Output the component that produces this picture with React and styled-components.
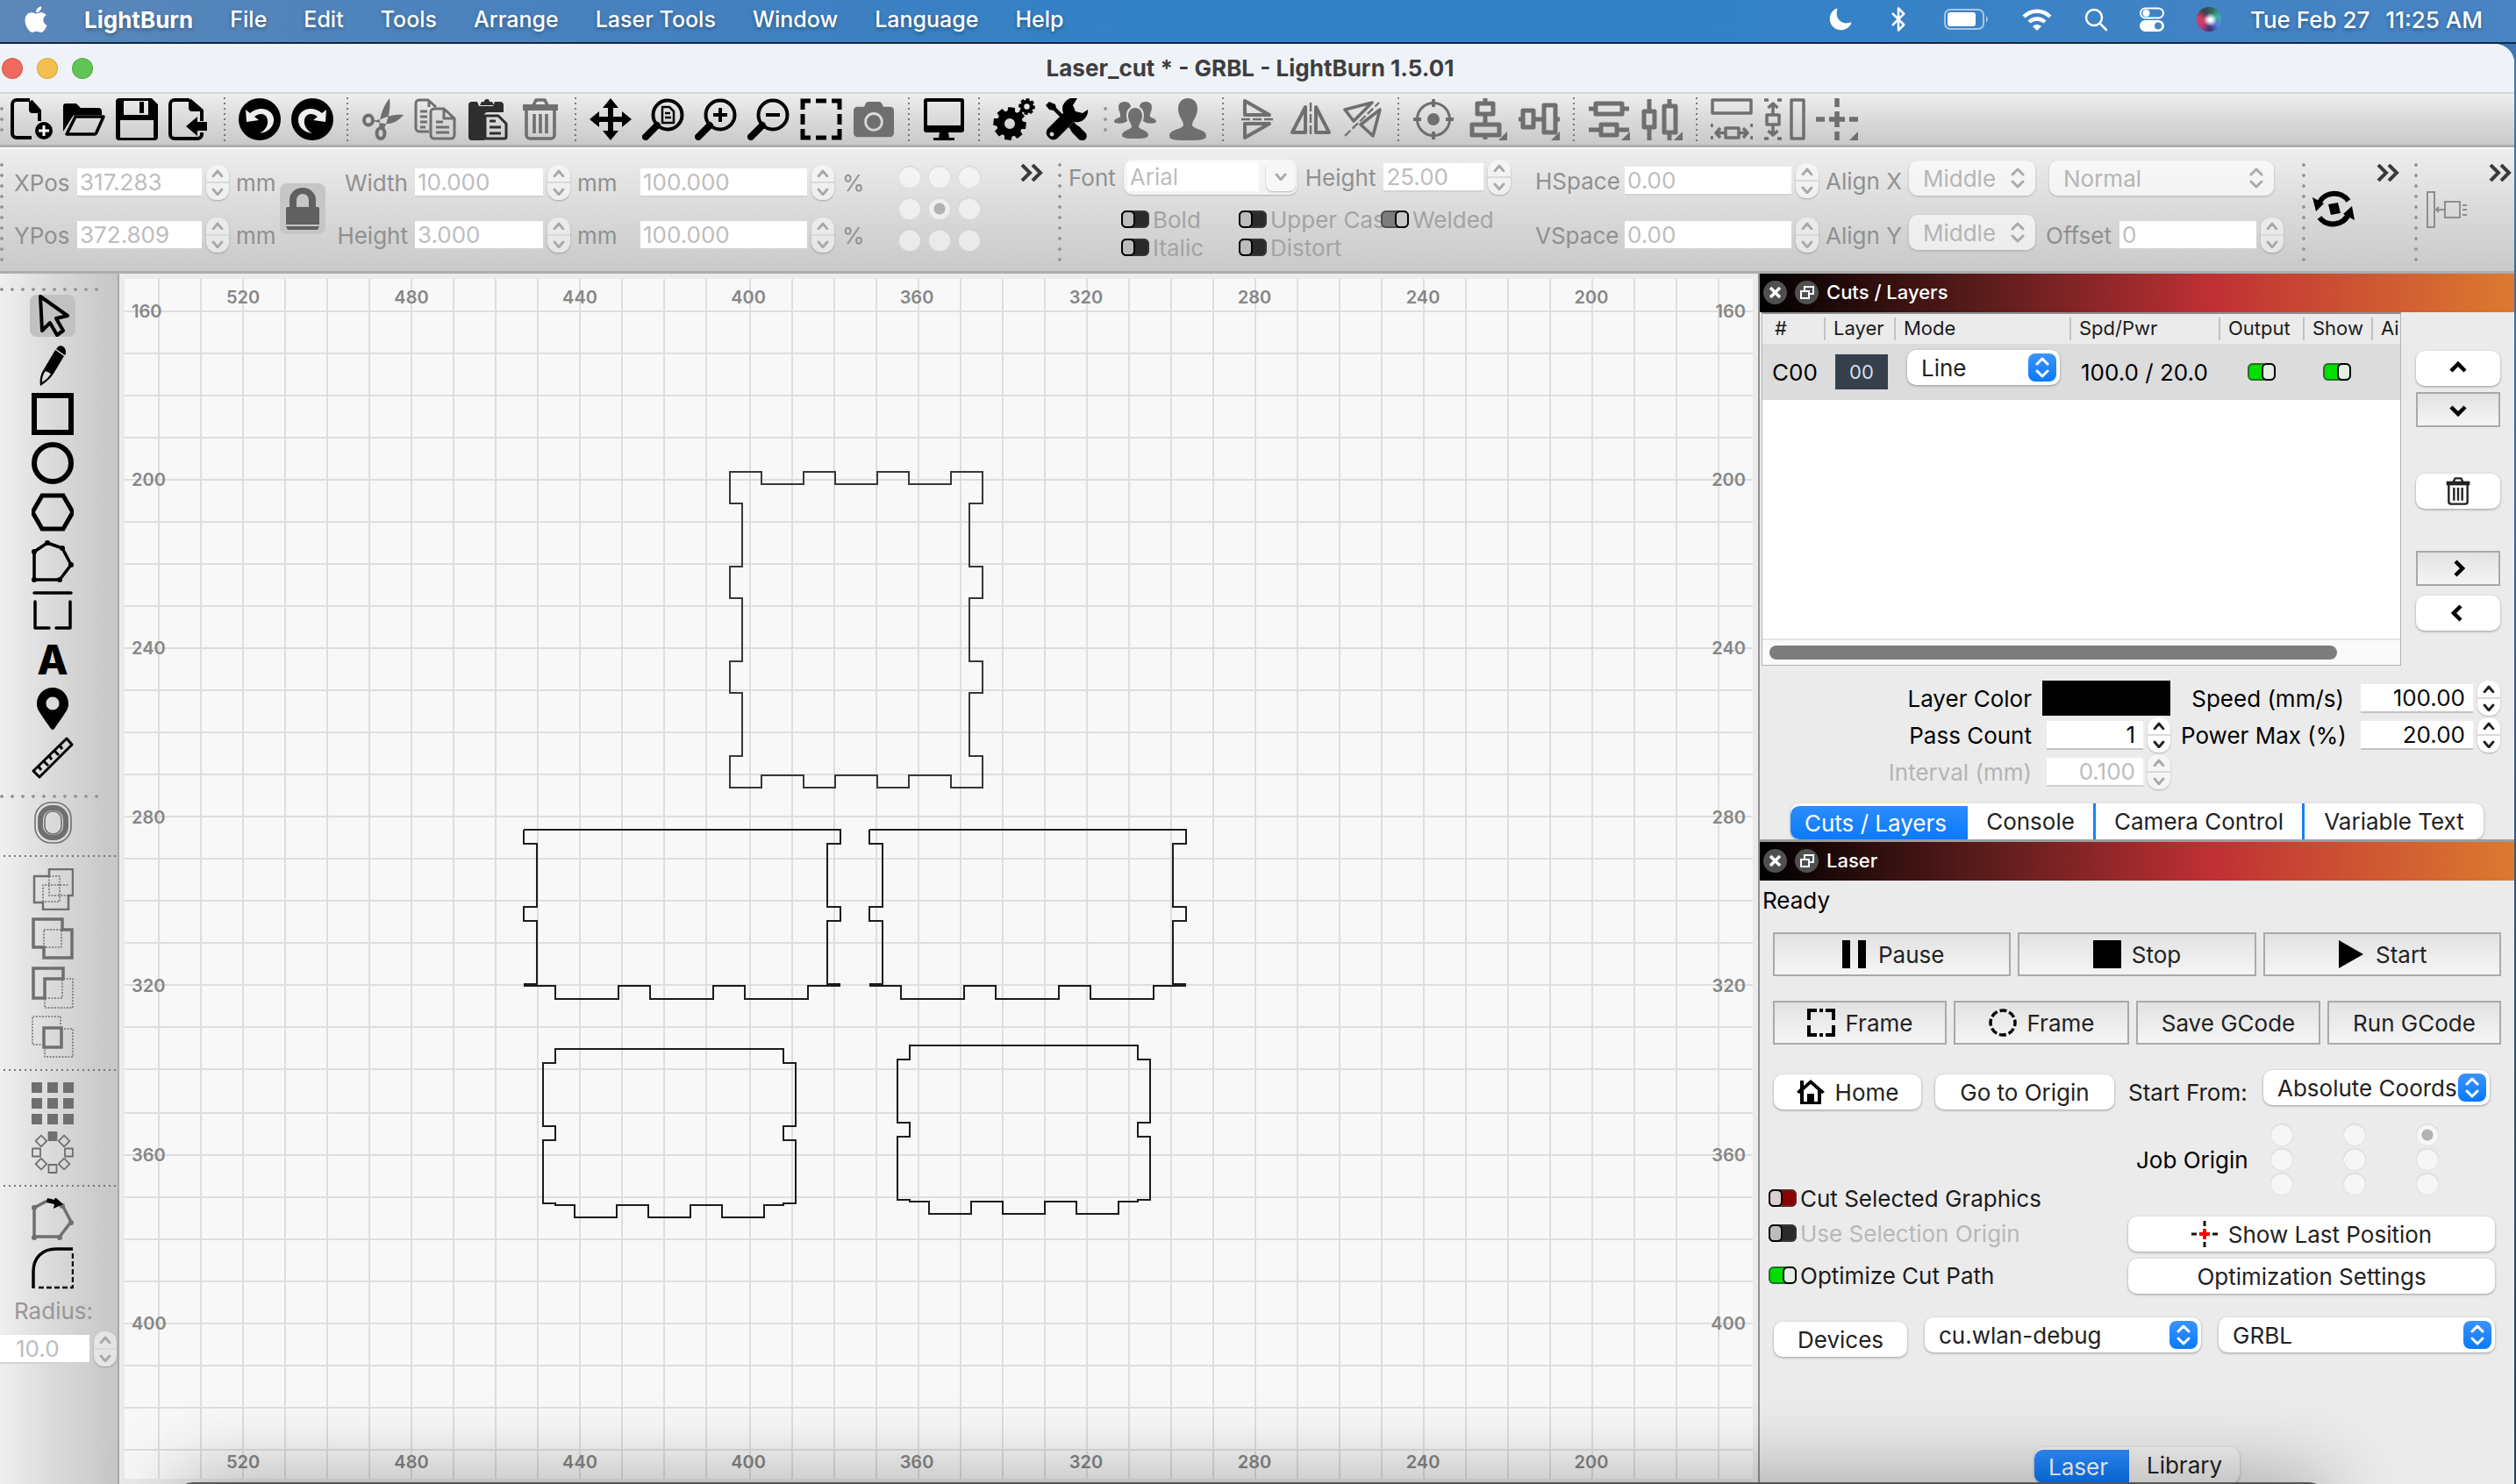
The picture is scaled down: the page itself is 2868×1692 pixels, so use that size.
import React from "react";
import styled, { createGlobalStyle, css } from "styled-components";
import { FaApple, FaCamera, FaMapMarkerAlt } from "react-icons/fa";
import { IoMoon } from "react-icons/io5";
import { Bluetooth } from "lucide-react";

const FONT = 'Inter, Roboto, "Liberation Sans", sans-serif';

const Global = createGlobalStyle`
  *, *::before, *::after { box-sizing: border-box; }
  body { margin: 0; font-family: ${FONT}; font-size: 26px; color: #1b1b1b; background: #ebebeb; overflow: hidden; }
  button, input, select { font: inherit; color: inherit; margin: 0; padding: 0; border: 0; background: none; outline: none; }
  svg { display: block; flex: none; }
`;

/* ---------- frame ---------- */

const Screen = styled.div`
  display: flex;
  flex-direction: column;
  height: 100vh;
  background: linear-gradient(#3f78b8, #23405f);
`;

const MenuBar = styled.header`
  display: flex;
  align-items: center;
  justify-content: space-between;
  height: 50px;
  flex: none;
  padding: 0 38px 4px 28px;
  color: #fff;
  border-bottom: 2px solid #14283f;
  background: linear-gradient(90deg, #5b87b9, #4180c0 30%, #3281c7 45%, #3381c7 70%, #4a84c2);
  text-shadow: 0 2px 4px rgba(0, 0, 0, 0.35);
`;

const MenuItems = styled.nav`
  display: flex;
  align-items: center;
  gap: 42px;
`;

const Apple = styled(FaApple)`
  width: 26px;
  height: 34px;
`;

const MenuButton = styled.button`
  font-size: ${(p) => (p.$bold ? 26 : 25)}px;
  font-weight: ${(p) => (p.$bold ? 700 : 500)};
  text-shadow: inherit;
`;

const StatusItems = styled.div`
  display: flex;
  align-items: center;
  gap: ${(p) => p.$gap}px;
  font-weight: 500;
`;

const Siri = styled.span`
  width: 28px;
  height: 28px;
  border-radius: 50%;
  background:
    radial-gradient(circle at 55% 52%, #fff 0 8%, rgba(255, 255, 255, 0) 36%),
    conic-gradient(from 20deg, #2c6b58, #3bb0a0, #5b7fe0, #3a3570, #c23a78, #d33f5f, #3f3f55, #2c6b58);
`;

const Window = styled.div`
  display: flex;
  flex-direction: column;
  flex: 1;
  min-height: 0;
  margin-right: 2px;
  overflow: hidden;
  border-top-right-radius: 22px;
  background: #ebebeb;
`;

const TitleBar = styled.div`
  display: grid;
  grid-template-columns: 1fr auto 1fr;
  align-items: center;
  height: 57px;
  flex: none;
  padding: 0 18px 0 2px;
  background: #eff3f7;
  border-bottom: 2px solid #d6d6d6;
`;

const Lights = styled.div`
  display: flex;
  gap: 16px;
`;

const Light = styled.button`
  width: 24px;
  height: 24px;
  border-radius: 50%;
  background: ${(p) => p.$color};
  box-shadow: inset 0 0 0 1px rgba(0, 0, 0, 0.12);
`;

const Title = styled.h1`
  margin: 0;
  font-size: 26px;
  font-weight: 700;
  color: #3e3e3f;
`;

/* ---------- tool bars ---------- */

const barFill = css`
  background: linear-gradient(#eeeeee, #dcdcdc 45%, #c9c9c9);
`;

const IconBar = styled.div`
  display: flex;
  align-items: center;
  height: 61px;
  flex: none;
  ${barFill}
  border-bottom: 3px solid #adadad;
`;

const ToolButton = styled.button`
  display: grid;
  place-items: center;
  width: 60px;
  height: 52px;
  color: ${(p) => (p.$dim ? "#6f6f6f" : "#000")};
`;

const VSep = styled.span`
  width: 2px;
  height: 50px;
  margin: 0 9px;
  background: repeating-linear-gradient(#777 0 2px, transparent 2px 6px);
`;

const VHandle = styled.span`
  width: 4px;
  height: ${(p) => p.$dots * 12}px;
  margin: 0 ${(p) => p.$after || 0}px 0 ${(p) => p.$before || 0}px;
  flex: none;
  background: radial-gradient(circle at 2px 6px, #999 0 2px, transparent 2px) 0 0 / 4px 12px;
`;

const PropBar = styled.div`
  display: flex;
  align-items: flex-start;
  height: 144px;
  flex: none;
  padding-top: 12px;
  color: #909090;
  border-top: 2px solid #fafafa;
  ${barFill}
  border-bottom: 3px solid #adadad;
`;

const PosGrid = styled.div`
  display: grid;
  grid-template-columns: 64px 173px 42px 52px 86px 177px 64px 222px 64px;
  grid-auto-rows: 40px;
  column-gap: 8px;
  row-gap: 20px;
  align-items: center;
  padding: 6px 0 0 12px;
`;

const Label = styled.label`
  text-align: ${(p) => p.$align || "left"};
  padding-right: ${(p) => p.$pad || 0}px;
  color: ${(p) => (p.$off ? "#b4b4b4" : "inherit")};
  white-space: nowrap;
`;

const LockButton = styled.button`
  grid-column: 4;
  grid-row: 1 / span 2;
  display: grid;
  place-items: center;
  width: 52px;
  height: 58px;
  border-radius: 8px;
  background: #c6c6c6;
  color: #606060;
`;

const Spin = styled.span`
  display: flex;
  align-items: center;
  justify-content: ${(p) => (p.$end ? "flex-end" : "flex-start")};
  gap: 5px;
`;

const SpinInput = styled.input`
  width: ${(p) => p.$w}px;
  height: 33px;
  padding: 0 ${(p) => (p.$right ? 9 : 3)}px;
  text-align: ${(p) => (p.$right ? "right" : "left")};
  background: #fff;
  border-bottom: 2px solid #c3c3c3;
  color: #0b0b0b;
  &:disabled { color: #bdbdbd; border-bottom-color: #d2d2d2; }
`;

const SpinArrows = styled.span`
  display: flex;
  flex-direction: column;
  width: 26px;
  height: 40px;
  flex: none;
  border-radius: 12px;
  overflow: hidden;
  background: ${(p) => (p.$off ? "rgba(255,255,255,0.5)" : "#fff")};
  box-shadow: 0 1px 2px rgba(0, 0, 0, 0.25);
  color: ${(p) => (p.$off ? "#a9a9a9" : "#222")};
`;

const SpinButton = styled.button`
  flex: 1;
  display: grid;
  place-items: center;
  & + & { border-top: 2px solid #dadada; }
`;

const RadioGrid = styled.div`
  display: grid;
  grid-template-columns: repeat(3, 26px);
  gap: ${(p) => p.$gap};
  padding-top: ${(p) => p.$top || 0}px;
`;

const Radio = styled.input`
  appearance: none;
  width: 26px;
  height: 26px;
  border-radius: 50%;
  background: rgba(255, 255, 255, 0.55);
  box-shadow: inset 0 0 0 1px rgba(0, 0, 0, 0.08), inset 0 2px 2px rgba(0, 0, 0, 0.05);
  &:checked { background: radial-gradient(circle, #b2b2b2 0 6px, rgba(255, 255, 255, 0.55) 7px); }
`;

const MoreButton = styled.button`
  margin: 5px ${(p) => p.$after}px 0 ${(p) => p.$before}px;
  color: #3a3a3a;
`;

const TextGroup = styled.div`
  display: flex;
  flex-direction: column;
  gap: 12px;
`;

const Row = styled.div`
  display: flex;
  align-items: center;
  gap: 9px;
`;

const Checks = styled.div`
  display: grid;
  grid-template-columns: 134px 162px 150px;
  grid-auto-rows: 32px;
  padding-left: 60px;
  color: #a3a3a3;
`;

const CheckLabel = styled.label`
  display: flex;
  align-items: center;
  gap: 4px;
  white-space: nowrap;
  color: ${(p) => p.$color || "inherit"};
`;

const Toggle = styled.input`
  appearance: none;
  display: inline-flex;
  flex: none;
  width: 32px;
  height: 20px;
  border-radius: 6px;
  background: ${(p) => p.$track || "#2a2a2a"};
  box-shadow: inset 0 0 0 2px rgba(60, 60, 60, 0.7);
  &::before {
    content: "";
    width: 16px;
    height: 20px;
    border: 2px solid #000;
    border-radius: 6px;
    background: ${(p) => p.$knob || "#bcbcbc"};
  }
  &:checked::before { margin-left: auto; }
`;

const Combo = styled.span`
  display: flex;
  align-items: center;
  width: 198px;
  height: 40px;
  padding: 3px 2px 4px 4px;
  border-radius: 10px;
  background: rgba(255, 255, 255, 0.6);
  box-shadow: 0 1px 2px rgba(0, 0, 0, 0.2);
  gap: 8px;
`;

const ComboInput = styled.input`
  flex: 1;
  min-width: 0;
  height: 33px;
  padding-left: 3px;
  background: #fff;
  color: #bdbdbd;
`;

const ComboButton = styled.button`
  display: grid;
  place-items: center;
  width: 34px;
  height: 33px;
  border-radius: 8px;
  background: #f7f7f7;
  box-shadow: 0 1px 2px rgba(0, 0, 0, 0.25);
  color: #a9a9a9;
`;

const AlignGrid = styled.div`
  display: grid;
  grid-template-columns: 94px 221px 87px 144px;
  grid-auto-rows: 40px;
  column-gap: 8px;
  row-gap: 22px;
  align-items: center;
  padding: 4px 0 0 26px;
`;

const OffsetGroup = styled.div`
  display: flex;
  flex-direction: column;
  gap: 22px;
  width: 272px;
  padding: 4px 0 0 12px;
`;

const OffsetCell = styled(Row)`
  height: 40px;
`;

const SelectWrap = styled.span`
  position: relative;
  display: block;
  width: ${(p) => (p.$w ? p.$w + "px" : "100%")};
  height: 40px;
  margin: 0 0 ${(p) => (p.$on ? 10 : 6)}px ${(p) => p.$left || 0}px;
`;

const SelectBox = styled.select`
  appearance: none;
  width: 100%;
  height: 40px;
  padding-left: 16px;
  border-radius: 10px;
  background: ${(p) => (p.$on ? "#fff" : "rgba(255,255,255,0.62)")};
  box-shadow: 0 1px 3px rgba(0, 0, 0, ${(p) => (p.$on ? 0.35 : 0.2)});
  color: ${(p) => (p.$on ? "#222" : "#b5b5b5")};
  opacity: 1;
`;

const SelectArrows = styled.span`
  position: absolute;
  top: 4px;
  right: 4px;
  display: grid;
  place-items: center;
  width: 32px;
  height: 32px;
  border-radius: 8px;
  pointer-events: none;
  color: ${(p) => (p.$on ? "#fff" : "#aaa")};
  background: ${(p) => (p.$on ? "linear-gradient(#3a94fb, #0a79fb)" : "none")};
`;

const TrailButton = styled.button`
  margin-top: ${(p) => p.$top}px;
  color: ${(p) => p.$color};
`;

const TrailGroup = styled.div`
  display: flex;
  align-items: flex-start;
  margin-left: auto;
`;

/* ---------- work area ---------- */

const Work = styled.main`
  display: grid;
  grid-template-columns: 136px minmax(0, 1fr) 862px;
  flex: 1;
  min-height: 0;
`;

const ToolColumn = styled.aside`
  display: flex;
  flex-direction: column;
  background: linear-gradient(90deg, #efefef, #dadada 45%, #c6c6c6);
  border-right: 2px solid #a9a9a9;
`;

const HHandle = styled.span`
  width: 112px;
  height: 4px;
  margin-top: ${(p) => p.$before}px;
  background: radial-gradient(circle at 2px 2px, #999 0 2px, transparent 2px) 0 0 / 12px 4px;
`;

const HSep = styled.span`
  height: 2px;
  margin: 9px 0 9px 4px;
  background: repeating-linear-gradient(90deg, #777 0 2px, transparent 2px 6px);
`;

const SideTool = styled.button`
  display: grid;
  place-items: center;
  width: 52px;
  height: 48px;
  margin: 4px 0 4px 34px;
  border-radius: 8px;
  background: ${(p) => (p.$active ? "#c1c1c1" : "none")};
  color: ${(p) => (p.$dim ? "#6f6f6f" : "#000")};
  font-size: 46px;
  line-height: 46px;
  font-weight: 800;
`;

const RadiusBlock = styled.div`
  display: flex;
  flex-direction: column;
  gap: 9px;
  padding-top: 7px;
  color: #979797;
`;

const RadiusLabel = styled.label`
  padding-left: 16px;
  line-height: 28px;
`;

const RadiusInput = styled(SpinInput)`
  padding-left: 18px;
`;

const CanvasFrame = styled.section`
  display: flex;
  flex-direction: column;
  padding: 6px;
  background: #ebebeb;
  min-width: 0;
`;

const Canvas = styled.svg`
  flex: 1 1 0;
  min-height: 0;
  width: 100%;
  background: #f8f8f8;
`;

const RulerText = styled.text`
  font: 600 20px ${FONT};
  fill: #868686;
`;

/* ---------- docks ---------- */

const Docks = styled.aside`
  display: flex;
  flex-direction: column;
  border-left: 2px solid #929292;
  background: #ebebeb;
`;

const Dock = styled.section`
  display: flex;
  flex-direction: column;
  flex: ${(p) => (p.$grow ? 1 : "none")};
`;

const DockTitle = styled.div`
  display: flex;
  align-items: center;
  gap: 9px;
  height: 44px;
  padding: 0 4px 2px;
  color: #fff;
  font-size: 22px;
  font-weight: 500;
  background: linear-gradient(90deg, #000, #5c1c1c 30%, #c03034 60%, #dc7a30);
`;

const DockButton = styled.button`
  display: grid;
  place-items: center;
  width: 27px;
  height: 27px;
  border-radius: 50%;
  background: #505050;
  color: #fff;
`;

const CutsBody = styled.div`
  display: flex;
  padding: 0 16px 0 2px;
  gap: 17px;
`;

const ListFrame = styled.div`
  flex: 1;
  display: flex;
  flex-direction: column;
  min-width: 0;
  height: 403px;
  border: 1px solid #b4b4b4;
  border-top: 2px solid #8f8f8f;
  background: #fff;
  overflow: hidden;
`;

const CutTable = styled.table`
  table-layout: fixed;
  width: 820px;
  border-collapse: collapse;
`;

const Th = styled.th`
  width: ${(p) => p.$w}px;
  height: 34px;
  padding: 0;
  font-size: 22px;
  font-weight: 400;
  text-align: left;
  background: #ebebeb;
  & > span {
    display: block;
    height: 26px;
    line-height: 24px;
    padding-left: ${(p) => p.$pad || 9}px;
    border-right: 2px solid #c2c2c2;
  }
`;

const Td = styled.td`
  height: 64px;
  padding: 0 0 0 ${(p) => p.$pad || 0}px;
  background: #dcdcdc;
  color: #000;
  white-space: nowrap;
  vertical-align: middle;
`;

const Swatch = styled.button`
  display: block;
  width: 60px;
  height: 40px;
  background: #36404d;
  color: #d8dfe8;
  font-size: 22px;
`;

const ScrollTrack = styled.div`
  margin-top: auto;
  height: 30px;
  padding: 6px 8px;
  border-top: 2px solid #e4e4e4;
  background: #fafafa;
`;

const ScrollThumb = styled.div`
  width: 91%;
  height: 16px;
  border-radius: 8px;
  background: #7d7d7d;
`;

const SideButtons = styled.div`
  display: flex;
  flex-direction: column;
  width: 96px;
  padding-top: 44px;
`;

const SideGroup = styled.div`
  display: flex;
  flex-direction: column;
  gap: ${(p) => p.$gap}px;
  margin-bottom: ${(p) => p.$after}px;
`;

const PushButton = styled.button`
  display: flex;
  align-items: center;
  justify-content: center;
  gap: ${(p) => p.$gap || 12}px;
  width: ${(p) => (p.$w ? p.$w + "px" : "auto")};
  height: ${(p) => p.$h || 40}px;
  color: #222;
  white-space: nowrap;
  ${(p) =>
    p.$flat
      ? css`
          border: 2px solid #a9a9a9;
          background: linear-gradient(#e2e2e2, #f5f5f5);
        `
      : css`
          border-radius: 10px;
          background: #fff;
          box-shadow: 0 1px 3px rgba(0, 0, 0, 0.35);
        `}
`;

const CutForm = styled.div`
  display: grid;
  grid-template-columns: 1fr 146px 192px 160px;
  grid-auto-rows: 40px;
  gap: 2px 12px;
  align-items: center;
  padding: 17px 16px 16px 10px;
  color: #000;
`;

const ColorBox = styled.button`
  width: 146px;
  height: 40px;
  background: #000;
`;

const Tabs = styled.div`
  display: flex;
  align-self: center;
  height: 41px;
  border-radius: 10px;
  background: ${(p) => (p.$shade ? "#f1f1f1" : "#fff")};
  box-shadow: 0 1px 3px rgba(0, 0, 0, 0.3);
`;

const Tab = styled.button`
  width: ${(p) => p.$w}px;
  color: #222;
  border-right: ${(p) => (p.$mark ? "3px solid #1a7ff5" : "0")};
  ${(p) =>
    p.$active &&
    css`
      margin-top: 3px;
      padding-right: 8px;
      color: #fff;
      border-radius: 10px 0 0 10px;
      background: linear-gradient(#2e8dfb, #0a79fb);
    `}
`;

const Divider = styled.div`
  height: 3px;
  background: #9b9b9b;
`;

const Ready = styled.p`
  margin: 0;
  padding: 0 3px;
  line-height: 46px;
  color: #000;
`;

const ButtonRow = styled.div`
  display: grid;
  grid-template-columns: ${(p) => p.$cols};
  gap: 8px;
  padding: ${(p) => p.$top}px 15px 0 15px;
`;

const HomeRow = styled.div`
  display: flex;
  align-items: center;
  gap: 16px;
  height: 40px;
  margin-top: 34px;
  padding: 0 28px 0 16px;
`;

const Push = styled.span`
  flex: 1;
  margin-right: -16px;
`;

const Options = styled.div`
  display: grid;
  grid-template-columns: 410px 1fr;
  padding: 14px 22px 0 10px;
`;

const OptionChecks = styled.div`
  display: grid;
  grid-template-rows: 40px 40px 8px 40px;
  padding-top: 67px;
`;

const OptionRight = styled.div`
  display: flex;
  flex-direction: column;
  gap: 8px;
`;

const JobRow = styled.div`
  display: flex;
  align-items: center;
  gap: 25px;
  height: 86px;
  margin-bottom: 14px;
  padding-left: 9px;
  color: #000;
`;

const DeviceRow = styled.div`
  display: grid;
  grid-template-columns: 152px 1fr 1fr;
  grid-template-rows: 40px;
  align-items: center;
  column-gap: 20px;
  margin-top: 32px;
  padding: 0 22px 0 16px;
`;

const DockFoot = styled.div`
  display: flex;
  justify-content: center;
  margin-top: auto;
  padding-bottom: 1px;
`;

const BottomShade = styled.div`
  position: absolute;
  left: 200px;
  right: 216px;
  bottom: -58px;
  height: 60px;
  pointer-events: none;
  background: #555;
  border-radius: 20px;
  box-shadow: 0 0 90px rgba(0, 0, 0, 0.4);
`;

/* ---------- icons ---------- */

const Ic = ({ s = 48, w = 4, children, flip }) => (
  <svg
    width={s}
    height={s}
    viewBox="0 0 48 48"
    fill="none"
    stroke="currentColor"
    strokeWidth={w}
    strokeLinejoin="round"
    aria-hidden="true"
  >
    {flip ? <g transform="matrix(-1 0 0 1 48 0)">{children}</g> : children}
  </svg>
);
const F = (p) => <path fill="currentColor" stroke="none" fillRule="evenodd" {...p} />;

const gear = (cx, cy, R, hole, n = 8) => {
  const pts = [];
  const r = R * 0.78;
  for (let i = 0; i < n; i++) {
    const a = (i / n) * Math.PI * 2;
    [[-0.3, r], [-0.2, R], [0.2, R], [0.3, r]].forEach(([o, q]) => {
      const t = a + o + 0.12;
      pts.push(`${(cx + q * Math.cos(t)).toFixed(2)} ${(cy + q * Math.sin(t)).toFixed(2)}`);
    });
  }
  return `M${pts.join("L")}Z M${cx - hole} ${cy}a${hole} ${hole} 0 1 0 ${hole * 2} 0a${hole} ${hole} 0 1 0 ${-hole * 2} 0Z`;
};

const Chevron = ({ up, w = 14, sw = 3 }) => (
  <svg width={w} height={w * 0.7} viewBox="0 0 14 10" fill="none" stroke="currentColor" strokeWidth={sw} strokeLinecap="round" strokeLinejoin="round">
    <path d={up ? "M2 8l5-6 5 6" : "M2 2l5 6 5-6"} />
  </svg>
);

const UpDown = () => (
  <svg width="16" height="24" viewBox="0 0 16 24" fill="none" stroke="currentColor" strokeWidth="3" strokeLinecap="round" strokeLinejoin="round">
    <path d="M2 8l6-6 6 6M2 16l6 6 6-6" />
  </svg>
);

const More = () => (
  <svg width="27" height="20" viewBox="0 0 27 20" fill="none" stroke="currentColor" strokeWidth="4">
    <path d="M2 1l9 9-9 9M14 1l9 9-9 9" />
  </svg>
);

const NewFile = () => (
  <Ic>
    <path d="M22 2H7a5 5 0 0 0-5 5v33a5 5 0 0 0 5 5h17M23 3l10 11v12" />
    <F d="M21 2v11a4 4 0 0 0 4 4h10z" />
    <circle cx="38" cy="37" r="10" fill="currentColor" stroke="none" />
    <path d="M32 37h12M38 31v12" stroke="#fff" strokeWidth="3" />
  </Ic>
);
const OpenFile = () => (
  <Ic w={3.5}>
    <F d="M0 38V9a3 3 0 0 1 3-3h12l5 5h20a4 4 0 0 1 4 4v4H15a5 5 0 0 0-5 3z" />
    <path d="M14 21h32l-8 18a3 3 0 0 1-3 2H4z" />
  </Ic>
);
const Save = () => (
  <Ic>
    <F d="M4 0h37l7 7v37a4 4 0 0 1-4 4H4a4 4 0 0 1-4-4V4a4 4 0 0 1 4-4zM9 3v16h28V3zM5 25v20h38V25z" />
    <F d="M27 4h5v13h-5z" />
  </Ic>
);
const Export = () => (
  <Ic>
    <path d="M24 2H7a5 5 0 0 0-5 5v34a5 5 0 0 0 5 5h26a5 5 0 0 0 5-5v-2M24 2l14 12v12" />
    <F d="M23 2v9a4 4 0 0 0 4 4h12zM20 32l13-11v6h11v10H33v6z" />
  </Ic>
);
const Undo = ({ flip }) => (
  <Ic flip={flip}>
    <circle cx="24" cy="24" r="24" fill="currentColor" stroke="none" />
    <path fill="#eee" stroke="none" d="M8 13l1 14 14-2-5-4c6-5 14-4 15 4 1 6-3 12-9 15 10-1 17-8 16-17-2-11-16-15-27-6z" />
  </Ic>
);
const Cut = () => (
  <Ic w={4}>
    <ellipse cx="8" cy="25" rx="5" ry="5.5" />
    <ellipse cx="22" cy="40" rx="4.5" ry="6" />
    <F d="M32 0c-7 9-11 19-12 34l6 1c4-11 8-22 6-35zM12 26l14 3c9 1 16-3 22-10-11-1-19 2-26 5z" />
  </Ic>
);
const Copy = () => (
  <Ic w={3}>
    <path d="M17 38H6a4 4 0 0 1-4-4V6a4 4 0 0 1 4-4h10l9 8M17 2v8M7 15h8M7 21h8M7 27h8M7 33h6" />
    <path d="M34 12H23a4 4 0 0 0-4 4v26a4 4 0 0 0 4 4h19a4 4 0 0 0 4-4V23zM34 12v11h12M25 27h8M25 33h15M25 39h15" />
  </Ic>
);
const Paste = () => (
  <Ic>
    <F fill="#2e2e2e" d="M6 4h6l2 5h16l2-5h6a4 4 0 0 1 4 4v8H24a4 4 0 0 0-4 4v28H6a4 4 0 0 1-4-4V8a4 4 0 0 1 4-4z" />
    <F fill="#2e2e2e" d="M15 8l2-4h3a3 3 0 0 1 6 0h3l2 4z" />
    <path stroke="#2e2e2e" strokeWidth="3" d="M21 46V20h15l9 9v15a2 2 0 0 1-2 2zM26 26h7M26 33h13M26 40h13" />
  </Ic>
);
const Trash = ({ s }) => (
  <Ic w={3.6} s={s}>
    <path d="M8 13v29a4 4 0 0 0 4 4h24a4 4 0 0 0 4-4V13M17 18v22M24 18v22M31 18v22M16 8l3-6h10l3 6" />
    <F d="M4 7h40v7H4z" />
  </Ic>
);
const Move = () => (
  <Ic w={6}>
    <path d="M24 6v36M6 24h36" />
    <F d="M24 0l9 11H15zM24 48l9-11H15zM0 24l11-9v18zM48 24l-11-9v18z" />
  </Ic>
);
const Mag = ({ children }) => (
  <Ic w={4}>
    <circle cx="29" cy="19" r="16.5" />
    <path d="M17 31L4 44" strokeWidth="8" strokeLinecap="round" />
    {children}
  </Ic>
);
const Dashes = ({ s, w = 5 }) => (
  <Ic w={w} s={s}>
    <path strokeLinejoin="miter" d="M3 13V3h9M18 3h12M36 3h9v10M45 18v12M45 35v10h-9M30 45H18M12 45H3V35M3 30V18" />
  </Ic>
);
const Monitor = () => (
  <Ic>
    <F d="M4 0h40a3 3 0 0 1 3 3v33a3 3 0 0 1-3 3H4a3 3 0 0 1-3-3V3a3 3 0 0 1 3-3zM5 4v27h38V4zM19 39h10l1 6h6v3H12v-3h6z" />
  </Ic>
);
const Gears = () => (
  <Ic>
    <F d={gear(19, 29, 19, 6)} />
    <F d={gear(38.5, 9.5, 9.5, 3.2)} />
  </Ic>
);
const Tools = () => (
  <Ic>
    <F d="M36 0a13 13 0 0 0-16 17L2 35a8 8 0 0 0 11 11l19-19a13 13 0 0 0 16-14l-6 4-8-2-3-7zM7 38.500a2.500 2.500 0 1 1 0 5 2.500 2.500 0 0 1 0-5z" />
    <F d="M0 8l4-4 7 3 1 4 10 10-3 3L9 14l-5-1zM26 33l6-6c3 4 5 4 7 6l6 6a5 5 0 0 1-7 8l-7-7c-2-2-2-4-5-7z" />
  </Ic>
);
const Group = () => (
  <Ic>
    <F d="M12 4c5 0 7 3 7 6-5 3-6 8-4 16-5 4-14 3-15 1 0-4 5-4 7-6 1-3-2-6-2-11 0-4 3-6 7-6zM36 4c-5 0-7 3-7 6 5 3 6 8 4 16 5 4 14 3 15 1 0-4-5-4-7-6-1-3 2-6 2-11 0-4-3-6-7-6z" />
    <F d="M24 11c5 0 8 4 8 9 0 6-4 9-4 13 2 3 11 4 11 9 0 4-8 4-15 4s-15 0-15-4c0-5 9-6 11-9 0-4-4-7-4-13 0-5 3-9 8-9z" />
  </Ic>
);
const Single = () => (
  <Ic>
    <F d="M24 0c7 0 11 5 11 12 0 9-6 13-6 19 2 5 16 4 16 12 0 5-9 5-21 5S3 48 3 43c0-8 14-7 16-12 0-6-6-10-6-19C13 5 17 0 24 0z" />
  </Ic>
);
const FlipV = () => (
  <Ic w={4}>
    <path d="M9 19V3l28 16zM9 29v16l28-16z" />
    <path d="M5 24h38" strokeWidth="2.400" strokeDasharray="10 3" />
  </Ic>
);
const FlipH = () => (
  <Ic w={4}>
    <path d="M18 39V10L3 39zM30 39V10l15 29z" />
    <path d="M24 5v38" strokeWidth="2.400" strokeDasharray="10 3" />
  </Ic>
);
const Mirror = () => (
  <Ic w={3.6}>
    <path d="M3 13L34 5 13 26zM43 13l-8 30-14-13z" />
    <path d="M3 43L42 5" strokeWidth="2.200" strokeDasharray="9 3" />
  </Ic>
);
const Target = () => (
  <Ic w={3}>
    <circle cx="24" cy="24" r="18.500" />
    <circle cx="24" cy="24" r="7" fill="currentColor" stroke="none" />
    <path strokeWidth="4" d="M24 1v9M24 38v9M1 24h9M38 24h9" />
  </Ic>
);
const Corner = () => <F d="M48 38v10H38z" />;
const AlignV = () => (
  <Ic w={5}>
    <path d="M14 6h18v12H14zM8 30h31v12H8zM23 0v5M23 18v12M23 42v5" />
    <Corner />
  </Ic>
);
const AlignH = () => (
  <Ic w={5}>
    <path d="M6 14h12v19H6zM30 8h13v31H30zM1 24h5M18 24h12M43 24h5" />
    <Corner />
  </Ic>
);
const DistV = () => (
  <Ic w={5}>
    <path d="M9 6h30v12H9zM15 30h18v12H15zM1 12h8M39 12h8M1 36h14M33 36h14" />
    <Corner />
  </Ic>
);
const DistH = () => (
  <Ic w={5}>
    <path d="M4 15h12v18H4zM27 9h13v30H27zM10 1v14M10 33v15M33 1v8M33 39v9" />
    <Corner />
  </Ic>
);
const SameW = () => (
  <Ic w={3.5}>
    <path d="M2 2h44v15H2z" />
    <path d="M17 34h15v11H17zM6 39.500h11M32 39.500h10M11 34l-5 5.500 5 5.500M37 34l5 5.500-5 5.500M1 29v4M1 43v4M47 29v4M47 43v4" />
  </Ic>
);
const SameH = () => (
  <Ic w={3.5}>
    <path d="M32 2h14v44H32z" />
    <path d="M4 19h14v11H4zM11 6v13M11 30v12M5.500 11L11 6l5.500 5M5.500 37l5.500 5 5.500-5M1 2h5M16 2h5M1 46h5M16 46h5" />
  </Ic>
);
const Cross = () => (
  <Ic w={5.5}>
    <path d="M24 0v10M24 38v10M0 24h10M38 24h10M15 24h18M24 15v18" />
    <Corner />
  </Ic>
);
const Lock = () => (
  <svg width="38" height="48" viewBox="0 0 38 48" fill="currentColor">
    <path fillRule="evenodd" d="M4 22V14a15 14 0 0 1 30 0v8h2a2 2 0 0 1 2 2v18H0V24a2 2 0 0 1 2-2zM12 22h14v-8a7 7 0 0 0-14 0zM0 44h38l-2 4H2z" />
  </svg>
);
const Refresh = () => (
  <Ic w={6}>
    <path d="M7 19A19 18 0 0 1 41 15M41 30A19 18 0 0 1 8 34" />
    <F d="M0 11l13 7-9 9zM48 37l-13-7 10-9zM18 19l11-2 3 12-11 2z" />
  </Ic>
);
const Dock2Icon = () => (
  <svg width="47" height="42" viewBox="0 0 47 42" fill="none" stroke="currentColor" strokeWidth="2">
    <path d="M1 1h8v40H1zM21 12h17v18H21zM11 21h9M14 18l-3 3 3 3M41 16h5M41 21h5M41 27h5" />
  </svg>
);

const Cursor = () => (
  <Ic w={4}>
    <path d="M10 2l31 22-13 3 8 14-7 5-8-14-9 9z" />
  </Ic>
);
const Pencil = () => (
  <Ic>
    <F d="M27 7l10 7-12 20c-4 6-9 10-15 14-1-7 0-13 4-19zM29 5c2-5 11-3 10 6l-1 2-10-7zM16 31c-3 3-4 8-4 13 4-3 8-6 10-10z" />
  </Ic>
);
const Poly = ({ arrow }) => (
  <Ic w={3.5}>
    <path d={arrow ? "M18 3L3 11v33h29l13-17L35 8" : "M3 13v32h29l13-17L35 9 18 3z"} />
    {[[3, arrow ? 11 : 13], [3, 45], [32, 45], [45, 28], [35, 9]].map(([x, y]) => (
      <circle key={x + "-" + y} cx={x} cy={y} r="3" fill="currentColor" stroke="none" />
    ))}
    {arrow ? (
      <F fill="#000" d="M18 0l8 2 1-3 9 8-11 5 1-5-9-2z" />
    ) : (
      <circle cx="18" cy="3" r="3" fill="currentColor" stroke="none" />
    )}
  </Ic>
);
const OpenFrame = () => (
  <Ic w={3.5}>
    <path strokeLinecap="round" d="M3 4h42M4 14v30h16M28 44h16V14" />
  </Ic>
);
const Ruler = () => (
  <Ic w={3}>
    <path d="M2 39L40 2l6 7L9 46zM8 34l3 4M14 28l5 5M20 22l3 4M26 16l5 5M32 10l3 4" />
  </Ic>
);
const OffsetO = () => (
  <Ic w={1.6}>
    <rect x="4" y="1" width="41" height="46" rx="18" />
    <rect x="10" y="7" width="29" height="34" rx="13" strokeWidth="6" />
    <rect x="15" y="11" width="19" height="26" rx="9" />
  </Ic>
);
const Union4 = () => (
  <Ic w={2.5}>
    <path strokeLinejoin="miter" d="M20 1h27v30h-5v16H13v-8H3V9h17z" />
    <path strokeWidth="1.500" strokeDasharray="2 1.500" d="M20 9v22h22M13 38V19h29M20 9h12v29H13" />
  </Ic>
);
const Union = () => (
  <Ic w={3.5}>
    <path strokeLinejoin="miter" d="M2 2h33v12h11v32H14V34H2z" />
    <path strokeWidth="1.500" strokeDasharray="2 1.500" d="M14 14h20v20H14z" />
  </Ic>
);
const Subtract = () => (
  <Ic w={3.5}>
    <path strokeLinejoin="miter" d="M2 2h34v12H15v22H2z" />
    <path strokeWidth="1.500" strokeDasharray="2 1.500" d="M36 14h11v33H15V36h20V16" />
  </Ic>
);
const Intersect = () => (
  <Ic w={3.5}>
    <path strokeLinejoin="miter" d="M14 14h20v22H14z" />
    <path strokeWidth="1.500" strokeDasharray="2 1.500" d="M33 10V1H1v32h11M37 15h10v32H15v-9" />
  </Ic>
);
const GridArray = () => (
  <Ic>
    {[0, 18, 36].map((y) => [0, 18, 36].map((x) => <F key={x + "." + y} d={`M${x} ${y}h12v12h-12z`} />))}
  </Ic>
);
const CircleArray = () => (
  <Ic w={1.8}>
    {[0, 1, 2, 3, 4, 5, 6, 7].map((i) => (
      <rect key={i} x="19.500" y="1" width="9" height="9" fill={i ? "none" : "currentColor"} transform={`rotate(${i * 45} 24 24)`} />
    ))}
  </Ic>
);
const RoundCorner = () => (
  <Ic w={3.5}>
    <path d="M2 47V28C2 12 12 2 28 2h19" />
    <path strokeWidth="2.400" strokeDasharray="6 3" d="M47 7v39H5" />
  </Ic>
);

/* ---------- small composites ---------- */

function NumberField({ id, value, w, off, right, label }) {
  return (
    <Spin $end={right}>
      <SpinInput id={id} $w={w} $right={right} defaultValue={value} disabled={off} aria-label={label} />
      <Arrows off={off} />
    </Spin>
  );
}

function Arrows({ off }) {
  return (
    <SpinArrows $off={off}>
      <SpinButton aria-label="Increase"><Chevron up /></SpinButton>
      <SpinButton aria-label="Decrease"><Chevron /></SpinButton>
    </SpinArrows>
  );
}

function Select({ id, value, on, w, left, label }) {
  return (
    <SelectWrap $w={w} $on={on} $left={left}>
      <SelectBox id={id} $on={on} disabled={!on} aria-label={label} defaultValue={value}>
        <option>{value}</option>
      </SelectBox>
      <SelectArrows $on={on}><UpDown /></SelectArrows>
    </SelectWrap>
  );
}

function Anchors({ name, checked, gap, top }) {
  return (
    <RadioGrid $gap={gap} $top={top}>
      {Array.from({ length: 9 }, (_, i) => (
        <Radio key={i} type="radio" name={name} disabled defaultChecked={i === checked} aria-label={`${name} ${i + 1}`} />
      ))}
    </RadioGrid>
  );
}

function Check({ children, color, on, track, knob, off }) {
  return (
    <CheckLabel $color={color}>
      <Toggle type="checkbox" defaultChecked={on} disabled={off} $track={track} $knob={knob} />
      {children}
    </CheckLabel>
  );
}

const BAR = [
  ["New", NewFile], ["Open", OpenFile], ["Save", Save], ["Import", Export], "|",
  ["Undo", Undo], ["Redo", () => <Undo flip />], "|",
  ["Cut", Cut, 1], ["Copy", Copy, 1], ["Paste", Paste], ["Delete", Trash, 1], "|",
  ["Pan", Move],
  ["Zoom to page", () => <Mag><path strokeWidth="2.500" d="M23 10h8l5 5v13H23zM26 17h6M26 22h7" /></Mag>],
  ["Zoom in", () => <Mag><path d="M21 19h16M29 11v16" /></Mag>],
  ["Zoom out", () => <Mag><path d="M21 19h16" /></Mag>],
  ["Frame selection", Dashes],
  ["Camera", () => <FaCamera size={46} />, 1], "|",
  ["Preview", Monitor], "|",
  ["Settings", Gears], ["Device settings", Tools], ":",
  ["Group", Group, 1], ["Ungroup", Single, 1], "|",
  ["Flip vertical", FlipV, 1], ["Flip horizontal", FlipH, 1], ["Mirror", Mirror, 1], "|",
  ["Align centers", Target, 1], ["Align vertical", AlignV, 1], ["Align horizontal", AlignH, 1], "|",
  ["Distribute vertical", DistV, 1], ["Distribute horizontal", DistH, 1], "|",
  ["Same width", SameW, 1], ["Same height", SameH, 1], ["Move to", Cross, 1],
];

const SIDE = [
  ["Select", Cursor, 0, 1], ["Draw lines", Pencil],
  ["Rectangle", () => <Ic w={6}><path strokeLinejoin="miter" d="M3 3h42v42H3z" /></Ic>],
  ["Ellipse", () => <Ic w={6}><circle cx="24" cy="24" r="21" /></Ic>],
  ["Polygon", () => <Ic w={5}><path strokeLinejoin="miter" d="M12 5h24l11 19-11 19H12L1 24z" /></Ic>],
  ["Edit nodes", Poly], ["Tabs", OpenFrame], ["Text", () => "A"],
  ["Position laser", () => <FaMapMarkerAlt size={48} />], ["Measure", Ruler], ":",
  ["Offset", OffsetO, 1], "|",
  ["Weld", Union4, 1], ["Union", Union, 1], ["Subtract", Subtract, 1], ["Intersect", Intersect, 1], "|",
  ["Grid array", GridArray, 1], ["Circular array", CircleArray, 1], "|",
  ["Start point", () => <Poly arrow />, 1], ["Radius", RoundCorner],
];

/* ---------- drawing ---------- */

const range = (n, start) => Array.from({ length: n }, (_, i) => start + i * 48);
const GRID_X = [...range(14, 39), ...range(24, 713)];
const GRID_Y = [...range(19, 37), ...range(9, 951)];
const TOP_MARKS = [[520, 135], [480, 327], [440, 519], [400, 711], [360, 903], [320, 1096], [280, 1288], [240, 1480], [200, 1672]];
const SIDE_MARKS = [[160, 37], [200, 229], [240, 421], [280, 614], [320, 806], [360, 999], [400, 1191]];

const LID = "M832 538H868V552H916V538H952V552H1000V538H1036V552H1084V538H1120V574H1105V646H1120V682H1105V754H1120V790H1105V862H1120V898H1084V884H1036V898H1000V884H952V898H916V884H868V898H832V862H846V790H832V754H846V682H832V646H846V574H832Z";
const LONG = "M597 946H958V962H943V1034H958V1050H943V1122H958M958 1124H921V1139H849V1124H813V1139H741V1124H705V1139H633V1124H597M597 1122H612V1050H597V1034H612V962H597V946";
const END = "M633 1196H893V1212H907V1284H893V1300H907V1372H893V1374H871V1388H823V1374H787V1388H739V1374H703V1388H655V1374H633V1372H619V1300H633V1284H619V1212H633Z";

function Drawing() {
  return (
    <Canvas role="img" aria-label="Workspace">
      <g stroke="#dedede" strokeWidth="2">
        {GRID_X.map((x) => <line key={"x" + x} x1={x} x2={x} y1="0" y2="100%" />)}
        {GRID_Y.map((y) => <line key={"y" + y} y1={y} y2={y} x1="0" x2="100%" />)}
      </g>
      {TOP_MARKS.map(([t, x]) => (
        <React.Fragment key={t}>
          <RulerText x={x} y="28" textAnchor="middle">{t}</RulerText>
          <RulerText x={x} y="100%" dy="-12" textAnchor="middle">{t}</RulerText>
        </React.Fragment>
      ))}
      {SIDE_MARKS.map(([t, y]) => (
        <React.Fragment key={t}>
          <RulerText x="8" y={y + 7}>{t}</RulerText>
          <RulerText x="100%" dx="-8" y={y + 7} textAnchor="end">{t}</RulerText>
        </React.Fragment>
      ))}
      <g transform="translate(-142 -318)" fill="none" stroke="#1c1c1c" strokeWidth="2">
        <path d={LID} stroke="#383838" />
        <path d={LONG} />
        <path d={LONG} transform="translate(394 0)" />
        <path d={END} />
        <path d={END} transform="translate(404 -4)" />
      </g>
    </Canvas>
  );
}

function DockHead({ children }) {
  return (
    <DockTitle>
      <DockButton aria-label="Close">
        <svg width="13" height="13" viewBox="0 0 13 13" stroke="currentColor" strokeWidth="3.500"><path d="M1 1l11 11M12 1L1 12" /></svg>
      </DockButton>
      <DockButton aria-label="Float">
        <svg width="16" height="15" viewBox="0 0 16 15" fill="none" stroke="currentColor" strokeWidth="2"><path d="M1 6h9v8H1zM5 5V1h10v8h-4" /></svg>
      </DockButton>
      {children}
    </DockTitle>
  );
}

const Angle = ({ r }) => (
  <svg width="22" height="22" viewBox="0 0 22 22" fill="none" stroke="#000" strokeWidth="4.500">
    <path d="M3 14l8-8 8 8" transform={`rotate(${r} 11 11)`} />
  </svg>
);

export default function App() {
  return (
    <Screen>
      <Global />
      <MenuBar>
        <MenuItems>
          <Apple />
          <MenuButton $bold>LightBurn</MenuButton>
          {["File", "Edit", "Tools", "Arrange", "Laser Tools", "Window", "Language", "Help"].map((m) => (
            <MenuButton key={m}>{m}</MenuButton>
          ))}
        </MenuItems>
        <StatusItems $gap={33}>
          <StatusItems $gap={37}>
            <IoMoon size={28} />
            <Bluetooth size={30} strokeWidth={2} />
            <svg width="52" height="24" viewBox="0 0 52 24" fill="none">
              <rect x="1" y="1" width="44" height="22" rx="6" stroke="#a9c6e4" strokeWidth="2" />
              <rect x="4" y="4" width="32" height="16" rx="3" fill="#fff" />
              <path d="M48 8q4 4 0 8z" fill="#a9c6e4" />
            </svg>
            <svg width="34" height="25" viewBox="0 0 34 25" fill="none" stroke="#fff" strokeWidth="4.500">
              <path d="M2 9a21 21 0 0 1 30 0M8 15a13 13 0 0 1 18 0" />
              <path d="M17 25l-5-5a7 7 0 0 1 10 0z" fill="#fff" stroke="none" />
            </svg>
            <svg width="26" height="27" viewBox="0 0 26 27" fill="none" stroke="#fff" strokeWidth="2.500" strokeLinecap="round">
              <circle cx="11" cy="11" r="9" /><path d="M18 18l7 7" />
            </svg>
            <svg width="28" height="28" viewBox="0 0 28 28">
              <rect x="1" y="1.500" width="26" height="11" rx="5.500" fill="none" stroke="#fff" strokeWidth="2" />
              <circle cx="7.500" cy="7" r="4" fill="#fff" />
              <rect x="0" y="15" width="28" height="13" rx="6.500" fill="#fff" />
              <circle cx="21" cy="21.500" r="4" fill="#4584c3" />
            </svg>
            <Siri />
          </StatusItems>
          <StatusItems $gap={18}><span>Tue Feb 27</span><span>11:25 AM</span></StatusItems>
        </StatusItems>
      </MenuBar>

      <Window>
        <TitleBar>
          <Lights>
            <Light $color="#ec6a5e" aria-label="Close" />
            <Light $color="#f4bf4f" aria-label="Minimize" />
            <Light $color="#61c454" aria-label="Zoom" />
          </Lights>
          <Title>Laser_cut * - GRBL - LightBurn 1.5.01</Title>
        </TitleBar>

        <IconBar>
          <VHandle $dots={3} $after={2} />
          {BAR.map((b, i) => {
            if (b === "|") return <VSep key={i} />;
            if (b === ":") return <VHandle key={i} $dots={3} $before={12} $after={2} />;
            const [name, Glyph, dim] = b;
            return <ToolButton key={i} $dim={dim} aria-label={name}><Glyph /></ToolButton>;
          })}
        </IconBar>

        <PropBar>
          <VHandle $dots={10} />
          <PosGrid>
            <Label htmlFor="xpos">XPos</Label>
            <NumberField id="xpos" value="317.283" w={142} off />
            <span>mm</span>
            <LockButton aria-label="Lock aspect"><Lock /></LockButton>
            <Label htmlFor="width" $align="right">Width</Label>
            <NumberField id="width" value="10.000" w={146} off />
            <span>mm</span>
            <NumberField label="Width percent" value="100.000" w={190} off />
            <span>%</span>
            <Label htmlFor="ypos">YPos</Label>
            <NumberField id="ypos" value="372.809" w={142} off />
            <span>mm</span>
            <Label htmlFor="height" $align="right">Height</Label>
            <NumberField id="height" value="3.000" w={146} off />
            <span>mm</span>
            <NumberField label="Height percent" value="100.000" w={190} off />
            <span>%</span>
          </PosGrid>
          <Anchors name="anchor" checked={4} gap="10px 8px" top={7} />
          <MoreButton $before={45} $after={16} aria-label="More"><More /></MoreButton>
          <VHandle $dots={10} $after={8} />
          <TextGroup>
            <Row>
              <Label htmlFor="font">Font</Label>
              <Combo>
                <ComboInput id="font" defaultValue="Arial" disabled />
                <ComboButton aria-label="Choose font"><Chevron /></ComboButton>
              </Combo>
              <Label htmlFor="fheight">Height</Label>
              <NumberField id="fheight" value="25.00" w={114} off />
            </Row>
            <Checks>
              <Check off>Bold</Check>
              <Check off>Upper Case</Check>
              <Check off on track="#7c7c7c" knob="#c8c8c8">Welded</Check>
              <Check off>Italic</Check>
              <Check off>Distort</Check>
            </Checks>
          </TextGroup>
          <AlignGrid>
            <Label htmlFor="hspace">HSpace</Label>
            <NumberField id="hspace" value="0.00" w={190} off />
            <Label htmlFor="alignx">Align X</Label>
            <Select id="alignx" value="Middle" />
            <Label htmlFor="vspace">VSpace</Label>
            <NumberField id="vspace" value="0.00" w={190} off />
            <Label htmlFor="aligny">Align Y</Label>
            <Select id="aligny" value="Middle" />
          </AlignGrid>
          <OffsetGroup>
            <OffsetCell><Select value="Normal" w={259} left={4} label="Text mode" /></OffsetCell>
            <OffsetCell>
              <Label htmlFor="offset">Offset</Label>
              <NumberField id="offset" value="0" w={156} off />
            </OffsetCell>
          </OffsetGroup>
          <TrailGroup>
            <VHandle $dots={10} $after={8} />
            <TrailButton $top={32} $color="#000" aria-label="Rotary"><Refresh /></TrailButton>
            <MoreButton $before={25} $after={16} aria-label="More"><More /></MoreButton>
            <VHandle $dots={10} $after={10} />
            <TrailButton $top={36} $color="#8e8e8e" aria-label="Dock"><Dock2Icon /></TrailButton>
            <MoreButton $before={24} $after={2} aria-label="More"><More /></MoreButton>
          </TrailGroup>
        </PropBar>

        <Work>
          <ToolColumn>
            <HHandle $before={16} />
            {SIDE.map((b, i) => {
              if (b === "|") return <HSep key={i} />;
              if (b === ":") return <HHandle key={i} $before={14} />;
              const [name, Glyph, dim, active] = b;
              return <SideTool key={i} $dim={dim} $active={active} aria-label={name}><Glyph /></SideTool>;
            })}
            <RadiusBlock>
              <RadiusLabel htmlFor="radius">Radius:</RadiusLabel>
              <Spin>
                <RadiusInput id="radius" $w={102} defaultValue="10.0" disabled />
                <Arrows off />
              </Spin>
            </RadiusBlock>
          </ToolColumn>

          <CanvasFrame><Drawing /></CanvasFrame>

          <Docks>
            <Dock>
              <DockHead>Cuts / Layers</DockHead>
              <CutsBody>
                <ListFrame>
                  <CutTable>
                    <thead>
                      <tr>
                        <Th $w={72} $pad={14}><span>#</span></Th>
                        <Th $w={80}><span>Layer</span></Th>
                        <Th $w={200}><span>Mode</span></Th>
                        <Th $w={170}><span>Spd/Pwr</span></Th>
                        <Th $w={96}><span>Output</span></Th>
                        <Th $w={78}><span>Show</span></Th>
                        <Th $w={124}><span>Ai</span></Th>
                      </tr>
                    </thead>
                    <tbody>
                      <tr>
                        <Td $pad={11}>C00</Td>
                        <Td $pad={11}><Swatch>00</Swatch></Td>
                        <Td $pad={13}><Select value="Line" on w={174} label="Mode" /></Td>
                        <Td $pad={11}>100.0 / 20.0</Td>
                        <Td $pad={31}><Toggle type="checkbox" defaultChecked $track="#00df00" $knob="#e5ede5" aria-label="Output" /></Td>
                        <Td $pad={21}><Toggle type="checkbox" defaultChecked $track="#00df00" $knob="#e5ede5" aria-label="Show" /></Td>
                        <Td />
                      </tr>
                    </tbody>
                  </CutTable>
                  <ScrollTrack><ScrollThumb /></ScrollTrack>
                </ListFrame>
                <SideButtons>
                  <SideGroup $gap={7} $after={53}>
                    <PushButton aria-label="Move up"><Angle r={0} /></PushButton>
                    <PushButton $flat aria-label="Move down"><Angle r={180} /></PushButton>
                  </SideGroup>
                  <SideGroup $gap={8} $after={48}>
                    <PushButton aria-label="Delete layer"><Trash s={32} /></PushButton>
                  </SideGroup>
                  <SideGroup $gap={11} $after={0}>
                    <PushButton $flat aria-label="Next"><Angle r={90} /></PushButton>
                    <PushButton aria-label="Previous"><Angle r={270} /></PushButton>
                  </SideGroup>
                </SideButtons>
              </CutsBody>
              <CutForm>
                <Label $align="right" htmlFor="color">Layer Color</Label>
                <ColorBox id="color" aria-label="Layer color" />
                <Label $align="right" $pad={6} htmlFor="speed">Speed (mm/s)</Label>
                <NumberField id="speed" value="100.00" w={128} right />
                <Label $align="right" htmlFor="pass">Pass Count</Label>
                <NumberField id="pass" value="1" w={110} right />
                <Label $align="right" $pad={6} htmlFor="power">Power Max (%)</Label>
                <NumberField id="power" value="20.00" w={128} right />
                <Label $align="right" $off htmlFor="interval">Interval (mm)</Label>
                <NumberField id="interval" value="0.100" w={110} off right />
              </CutForm>
              <Tabs>
                <Tab $active $w={202}>Cuts / Layers</Tab>
                <Tab $w={146} $mark>Console</Tab>
                <Tab $w={238} $mark>Camera Control</Tab>
                <Tab $w={204}>Variable Text</Tab>
              </Tabs>
              <Divider />
            </Dock>

            <Dock $grow>
              <DockHead>Laser</DockHead>
              <Ready>Ready</Ready>
              <ButtonRow $cols="repeat(3, 1fr)" $top={13}>
                <PushButton $flat $h={50}>
                  <svg width="32" height="32" viewBox="0 0 32 32"><path d="M3 0h9v32H3zM21 0h9v32h-9z" /></svg>Pause
                </PushButton>
                <PushButton $flat $h={50}>
                  <svg width="32" height="32" viewBox="0 0 32 32"><rect width="32" height="32" rx="1" /></svg>Stop
                </PushButton>
                <PushButton $flat $h={50}>
                  <svg width="32" height="32" viewBox="0 0 32 32"><path d="M2 0l28 16L2 32z" /></svg>Start
                </PushButton>
              </ButtonRow>
              <ButtonRow $cols="198fr 200fr 210fr 198fr" $top={28}>
                <PushButton $flat $h={50}>
                  <svg width="32" height="32" viewBox="0 0 32 32" fill="none" stroke="#000" strokeWidth="4"><path d="M2 13V2h9M21 2h9v11M30 19v11h-9M11 30H2V19M14 2h4M14 30h4" /></svg>Frame
                </PushButton>
                <PushButton $flat $h={50}>
                  <svg width="32" height="32" viewBox="0 0 32 32" fill="none" stroke="#000" strokeWidth="3.500"><circle cx="16" cy="16" r="14" strokeDasharray="8 3" strokeDashoffset="4" /></svg>Frame
                </PushButton>
                <PushButton $flat $h={50}>Save GCode</PushButton>
                <PushButton $flat $h={50}>Run GCode</PushButton>
              </ButtonRow>
              <HomeRow>
                <PushButton $w={168}>
                  <svg width="32" height="28" viewBox="0 0 32 28"><path fillRule="evenodd" d="M16 0l16 14-3 2-1-1v13H4V15l-1 1-3-2 4-4V1h4v6zM16 5L8 12v13h4v-9h8v9h4V12z" /></svg>Home
                </PushButton>
                <PushButton $w={204}>Go to Origin</PushButton>
                <Label htmlFor="startfrom">Start From:</Label>
                <Push />
                <Select id="startfrom" value="Absolute Coords" on w={258} />
              </HomeRow>
              <Options>
                <OptionChecks>
                  <Check track="#8d0000" knob="#dccfcf">Cut Selected Graphics</Check>
                  <Check off color="#b8b8b8">Use Selection Origin</Check>
                  <span />
                  <Check on track="#00df00" knob="#e5ede5">Optimize Cut Path</Check>
                </OptionChecks>
                <OptionRight>
                  <JobRow>
                    <span>Job Origin</span>
                    <Anchors name="job origin" checked={2} gap="2px 57px" />
                  </JobRow>
                  <PushButton>
                    <svg width="30" height="30" viewBox="0 0 30 30" fill="none" strokeWidth="3"><path stroke="#111" d="M15 0v6M15 24v6M0 15h6M24 15h6" /><path stroke="#f00" strokeWidth="4" d="M15 9v12M9 15h12" /></svg>Show Last Position
                  </PushButton>
                  <PushButton>Optimization Settings</PushButton>
                </OptionRight>
              </Options>
              <DeviceRow>
                <PushButton>Devices</PushButton>
                <Select value="cu.wlan-debug" on label="Port" />
                <Select value="GRBL" on label="Device" />
              </DeviceRow>
              <DockFoot>
                <Tabs $shade>
                  <Tab $active $w={108}>Laser</Tab>
                  <Tab $w={126}>Library</Tab>
                </Tabs>
              </DockFoot>
            </Dock>
          </Docks>
        </Work>
      </Window>
      <BottomShade />
    </Screen>
  );
}
